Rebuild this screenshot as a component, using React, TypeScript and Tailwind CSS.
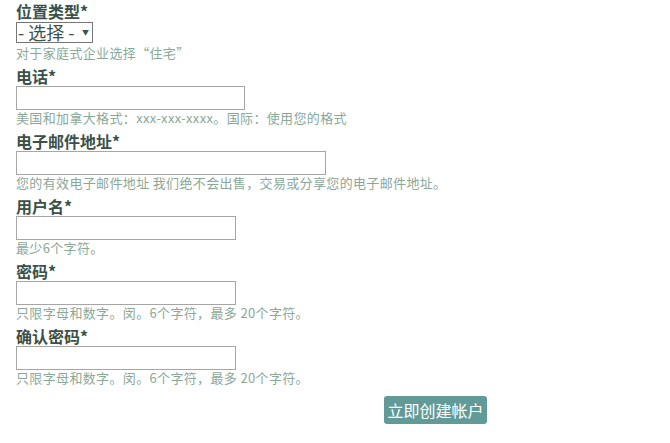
import React from "react";

const font = { fontFamily: '"Noto Sans CJK SC", "Open Sans", sans-serif' };

function Label({ children }: { children: React.ReactNode }) {
  return (
    <div className="text-[16px] leading-[20px] font-bold text-[#3b5147]">{children}</div>
  );
}

function Hint({ children }: { children: React.ReactNode }) {
  return (
    <div className="text-[13px] tracking-[0.35px] leading-[16px] text-[#8aa898] mb-[5px] whitespace-nowrap">
      {children}
    </div>
  );
}

function TextInput({ w }: { w: string }) {
  return <input type="text" className={`block h-[24px] border border-[#a6a6a6] bg-white outline-none ${w}`} />;
}

export default function App() {
  return (
    <div className="bg-white w-[670px] h-[443px] pl-[16px] pt-[1px]" style={font}>
      <Label>位置类型*</Label>
      <div className="flex items-center h-[21px] w-[77px] border border-[#767676] bg-white text-[#3d5248] mt-[1px] mb-[2px]">
        <span className="text-[18px] leading-[19px] pl-[1px] whitespace-nowrap">- 选择 -</span>
        <span className="ml-auto mr-[3px] text-[7px] leading-none">▼</span>
      </div>
      <Hint>对于家庭式企业选择“住宅”</Hint>

      <Label>电话*</Label>
      <TextInput w="w-[229px]" />
      <Hint>美国和加拿大格式：xxx-xxx-xxxx。国际：使用您的格式</Hint>

      <Label>电子邮件地址*</Label>
      <TextInput w="w-[310px]" />
      <Hint>您的有效电子邮件地址 我们绝不会出售，交易或分享您的电子邮件地址。</Hint>

      <Label>用户名*</Label>
      <TextInput w="w-[220px]" />
      <Hint>最少6个字符。</Hint>

      <Label>密码*</Label>
      <TextInput w="w-[220px]" />
      <Hint>只限字母和数字。闵。6个字符，最多 20个字符。</Hint>

      <Label>确认密码*</Label>
      <TextInput w="w-[220px]" />
      <Hint>只限字母和数字。闵。6个字符，最多 20个字符。</Hint>

      <div className="ml-[368px] mt-[10px]">
        <button className="h-[28px] w-[103px] rounded-[3px] bg-[#629a98] text-white text-[16px] leading-[28px] whitespace-nowrap">
          立即创建帐户
        </button>
      </div>
    </div>
  );
}
